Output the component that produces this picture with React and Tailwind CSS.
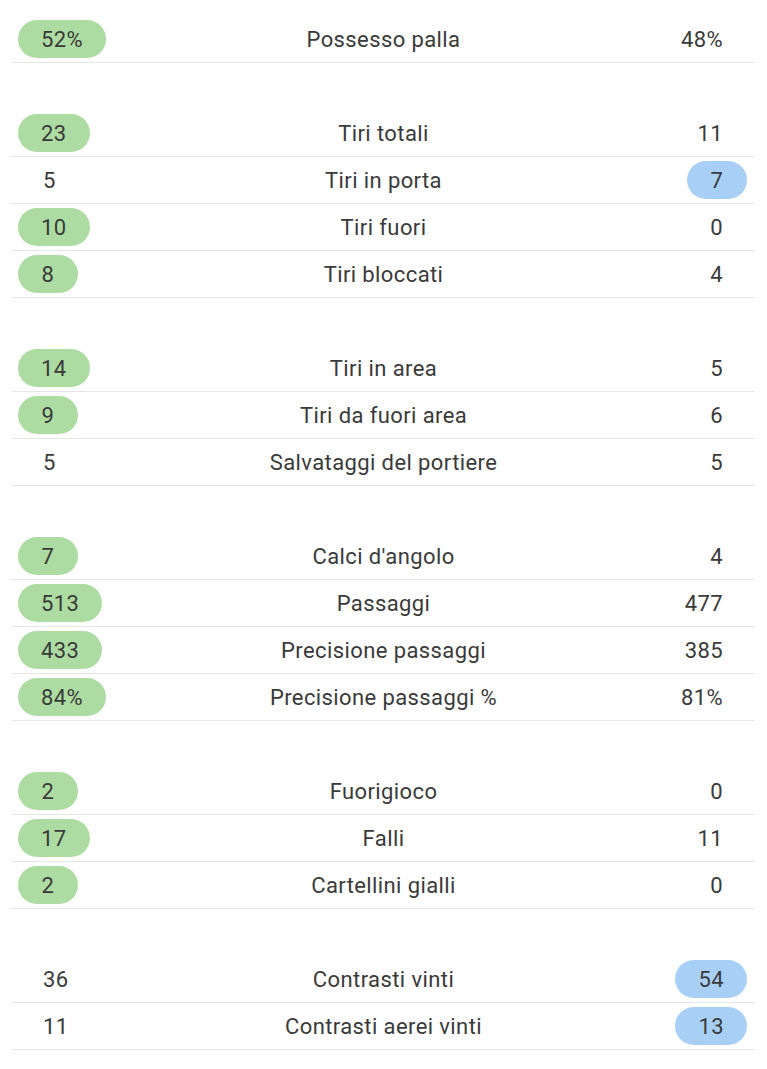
import React from "react";

const groups = [
  [["52%", "Possesso palla", "48%", "L"]],
  [
    ["23", "Tiri totali", "11", "L"],
    ["5", "Tiri in porta", "7", "R"],
    ["10", "Tiri fuori", "0", "L"],
    ["8", "Tiri bloccati", "4", "L"],
  ],
  [
    ["14", "Tiri in area", "5", "L"],
    ["9", "Tiri da fuori area", "6", "L"],
    ["5", "Salvataggi del portiere", "5", ""],
  ],
  [
    ["7", "Calci d'angolo", "4", "L"],
    ["513", "Passaggi", "477", "L"],
    ["433", "Precisione passaggi", "385", "L"],
    ["84%", "Precisione passaggi %", "81%", "L"],
  ],
  [
    ["2", "Fuorigioco", "0", "L"],
    ["17", "Falli", "11", "L"],
    ["2", "Cartellini gialli", "0", "L"],
  ],
  [
    ["36", "Contrasti vinti", "54", "R"],
    ["11", "Contrasti aerei vinti", "13", "R"],
  ],
];

function Row({ l, label, r, win }) {
  return (
    <div className="h-[47px] border-b border-[#e6e6e6] grid grid-cols-[1fr_auto_1fr] items-center px-[6px]">
      <div className="flex justify-start">
        {win === "L" ? (
          <span className="h-[38px] min-w-[60px] px-[23px] rounded-full bg-[#addca2] flex items-center justify-center">
            {l}
          </span>
        ) : (
          <span className="pl-[25px]">{l}</span>
        )}
      </div>
      <div className="text-center whitespace-nowrap">{label}</div>
      <div className="flex justify-end pr-[2px]">
        {win === "R" ? (
          <span className="h-[38px] min-w-[60px] px-[23px] rounded-full bg-[#a8d0f6] flex items-center justify-center">
            {r}
          </span>
        ) : (
          <span className="pr-[24px]">{r}</span>
        )}
      </div>
    </div>
  );
}

export default function App() {
  return (
    <div
      className="w-[767px] min-h-[1069px] bg-white pt-[16px] pl-[12px] pr-[12px] text-[22px] tracking-[0.4px] text-[#3a3a3a]"
      style={{ fontFamily: "Roboto, 'Liberation Sans', sans-serif" }}
    >
      {groups.map((g, gi) => (
        <div key={gi} className={gi > 0 ? "mt-[47px]" : ""}>
          {g.map(([l, label, r, win], i) => (
            <Row key={i} l={l} label={label} r={r} win={win} />
          ))}
        </div>
      ))}
    </div>
  );
}
